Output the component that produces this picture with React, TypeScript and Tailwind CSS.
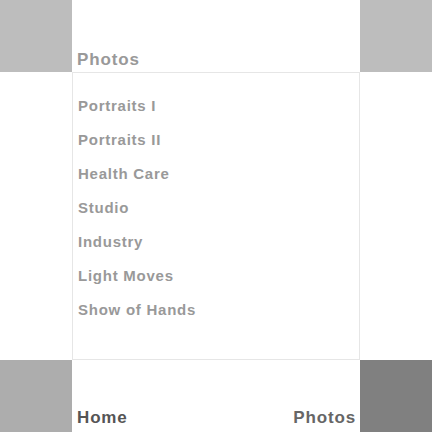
import React from "react";

const items = [
  "Portraits I",
  "Portraits II",
  "Health Care",
  "Studio",
  "Industry",
  "Light Moves",
  "Show of Hands",
];

export default function App() {
  return (
    <div
      className="grid h-[432px] w-[432px] grid-cols-[72px_288px_72px] grid-rows-[72px_288px_72px] bg-white"
      style={{ fontFamily: '"Liberation Sans", Arial, sans-serif' }}
    >
      <div className="bg-[#bdbdbd]" />
      <div className="flex items-end pb-[2px] pl-[5px]">
        <span className="text-[17px] font-bold leading-5 tracking-[0.05em] text-[#999999]">Photos</span>
      </div>
      <div className="bg-[#bdbdbd]" />

      <div />
      <div className="border border-[#e6e6e6]">
        <ul className="flex flex-col pl-[5px] pt-[16px]">
          {items.map((item) => (
            <li key={item} className="text-[15px] font-bold leading-[34px] tracking-[0.05em] text-[#999999]">
              {item}
            </li>
          ))}
        </ul>
      </div>
      <div />

      <div className="bg-[#adadad]" />
      <div className="flex items-end justify-between pb-[4px] pl-[5px] pr-[4px]">
        <span className="text-[17px] font-bold leading-5 tracking-[0.05em] text-[#555555]">Home</span>
        <span className="text-[17px] font-bold leading-5 tracking-[0.05em] text-[#666666]">Photos</span>
      </div>
      <div className="bg-[#808080]" />
    </div>
  );
}
